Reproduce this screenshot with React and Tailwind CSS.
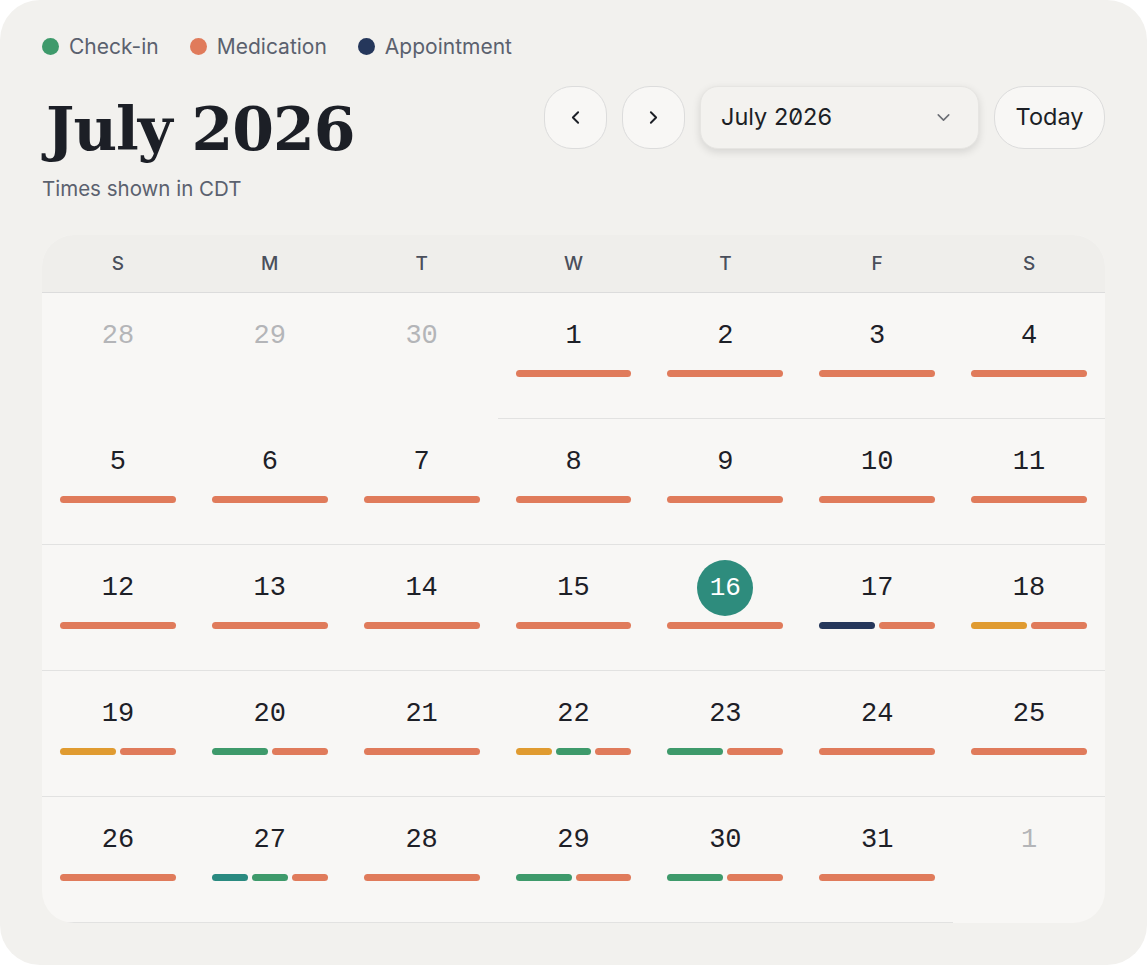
import { ChevronLeft, ChevronRight, ChevronDown } from 'lucide-react';

const COLORS = {
  checkin: 'bg-[#3e9a6b]',
  med: 'bg-[#e07b5b]',
  appt: 'bg-[#25375b]',
  refill: 'bg-[#e09b30]',
  therapy: 'bg-[#2a8a80]',
};

const LEGEND = [
  { label: 'Check-in', dot: 'bg-[#3e9a6b]' },
  { label: 'Medication', dot: 'bg-[#e07b5b]' },
  { label: 'Appointment', dot: 'bg-[#25375b]' },
];

const WEEKDAYS = ['S', 'M', 'T', 'W', 'T', 'F', 'S'];

// per-day event markers, everything else gets a single medication bar
const EVENTS = {
  17: ['appt', 'med'],
  18: ['refill', 'med'],
  19: ['refill', 'med'],
  20: ['checkin', 'med'],
  22: ['refill', 'checkin', 'med'],
  23: ['checkin', 'med'],
  27: ['therapy', 'checkin', 'med'],
  29: ['checkin', 'med'],
  30: ['checkin', 'med'],
};

const buildWeeks = () => {
  const cells = [28, 29, 30].map((d) => ({ day: d, outside: true }));
  for (let d = 1; d <= 31; d++) cells.push({ day: d, outside: false });
  cells.push({ day: 1, outside: true });
  const weeks = [];
  for (let i = 0; i < cells.length; i += 7) weeks.push(cells.slice(i, i + 7));
  return weeks;
};

function DayCell({ cell }) {
  const isToday = !cell.outside && cell.day === 16;
  const bars = cell.outside ? [] : EVENTS[cell.day] || ['med'];
  return (
    <div
      className={`flex h-[126px] flex-col items-center border-b ${
        cell.outside ? 'border-transparent' : 'border-[#e2e2e1]'
      }`}
    >
      <div className="mt-[14px] flex h-[58px] items-center justify-center">
        {isToday ? (
          <span className="flex h-[56px] w-[56px] items-center justify-center rounded-full bg-[#2e8c7d] font-['Liberation_Mono',monospace] text-[26px] text-white slashed-zero">
            {cell.day}
          </span>
        ) : (
          <span
            className={`font-['Liberation_Mono',monospace] text-[27px] slashed-zero ${
              cell.outside ? 'text-[#b4b5b8]' : 'text-[#1d2027]'
            }`}
          >
            {cell.day}
          </span>
        )}
      </div>
      {bars.length > 0 && (
        <div className="mt-[5px] flex w-full gap-[4px] px-[18px]">
          {bars.map((b, i) => (
            <span key={i} className={`h-[7px] flex-1 rounded-full ${COLORS[b]}`} />
          ))}
        </div>
      )}
    </div>
  );
}

export default function App() {
  const weeks = buildWeeks();

  return (
    <div className="h-[965px] w-[1147px] bg-white">
      <div className="h-full w-full rounded-[40px] bg-[#f2f1ee] px-[42px] pt-[31px] font-['Inter',sans-serif]">
        <div className="flex items-center gap-[31px]">
          {LEGEND.map((item) => (
            <div key={item.label} className="flex items-center gap-[10px]">
              <span className={`h-[17px] w-[17px] rounded-full ${item.dot}`} />
              <span className="text-[21px] text-[#5b616e]">{item.label}</span>
            </div>
          ))}
        </div>

        <div className="mt-[28px] flex items-start justify-between">
          <div>
            <h1 className="pl-[4px] font-['DejaVu_Serif',serif] text-[60px] font-bold leading-[76px] tracking-[-1px] text-[#1c1f26]">
              July 2026
            </h1>
            <p className="mt-[7px] text-[20.5px] text-[#5b616e]">Times shown in CDT</p>
          </div>
          <div className="mt-[-5px] flex items-center gap-[15px]">
            <button className="flex h-[63px] w-[63px] items-center justify-center rounded-[28px] border border-[#dcdcdc] bg-[#f8f7f5] text-[#1c1f26]">
              <ChevronLeft size={21} strokeWidth={2.2} />
            </button>
            <button className="flex h-[63px] w-[63px] items-center justify-center rounded-[28px] border border-[#dcdcdc] bg-[#f8f7f5] text-[#1c1f26]">
              <ChevronRight size={21} strokeWidth={2.2} />
            </button>
            <button className="flex h-[63px] w-[279px] items-center justify-between rounded-[18px] border border-[#e6e5e2] bg-[#f3f2ef] pl-[20px] pr-[24px] text-[#1c1f26] shadow-[0_3px_8px_rgba(0,0,0,0.12)]">
              <span className="text-[23.5px] slashed-zero">July 2026</span>
              <ChevronDown size={21} strokeWidth={1.8} className="text-[#6b6e74]" />
            </button>
            <button className="h-[63px] w-[111px] rounded-[30px] border border-[#dcdcdc] bg-[#f8f7f5] text-[23.5px] text-[#1c1f26]">
              Today
            </button>
          </div>
        </div>

        <div className="mt-[31px] overflow-hidden rounded-[32px] bg-[#f8f7f5]">
          <div className="grid h-[58px] grid-cols-7 items-center border-b border-[#dcdcdc] bg-[#efeeeb]">
            {WEEKDAYS.map((d, i) => (
              <div key={i} className="text-center text-[19px] font-medium text-[#4a4f5b]">
                {d}
              </div>
            ))}
          </div>
          {weeks.map((week, wi) => (
            <div key={wi} className="grid grid-cols-7">
              {week.map((cell, ci) => (
                <DayCell key={ci} cell={cell} />
              ))}
            </div>
          ))}
        </div>
      </div>
    </div>
  );
}
